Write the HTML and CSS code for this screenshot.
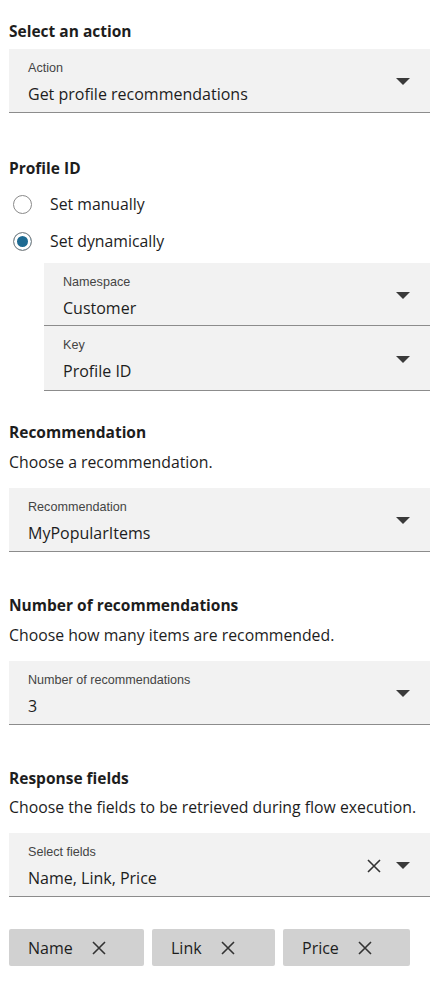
FILE: index.html
```html
<!DOCTYPE html>
<html>
<head>
<meta charset="utf-8">
<link rel="stylesheet" href="styles.css">
</head>
<body>
<div class="page">
  <section class="sec sec-action">
    <h2 class="heading">Select an action</h2>
    <div class="select">
      <div class="select-text">
        <div class="select-label">Action</div>
        <div class="select-value">Get profile recommendations</div>
      </div>
      <span class="caret"></span>
    </div>
  </section>

  <section class="sec sec-profile">
    <h2 class="heading">Profile ID</h2>
    <div class="radios">
      <label class="radio"><span class="radio-dot"></span><span class="radio-text">Set manually</span></label>
      <label class="radio"><span class="radio-dot checked"></span><span class="radio-text">Set dynamically</span></label>
    </div>
    <div class="nested">
      <div class="select">
        <div class="select-text">
          <div class="select-label">Namespace</div>
          <div class="select-value">Customer</div>
        </div>
        <span class="caret"></span>
      </div>
      <div class="select">
        <div class="select-text">
          <div class="select-label">Key</div>
          <div class="select-value">Profile ID</div>
        </div>
        <span class="caret"></span>
      </div>
    </div>
  </section>

  <section class="sec sec-rec">
    <h2 class="heading">Recommendation</h2>
    <p class="desc">Choose a recommendation.</p>
    <div class="select">
      <div class="select-text">
        <div class="select-label">Recommendation</div>
        <div class="select-value">MyPopularItems</div>
      </div>
      <span class="caret"></span>
    </div>
  </section>

  <section class="sec sec-num">
    <h2 class="heading">Number of recommendations</h2>
    <p class="desc">Choose how many items are recommended.</p>
    <div class="select">
      <div class="select-text">
        <div class="select-label">Number of recommendations</div>
        <div class="select-value">3</div>
      </div>
      <span class="caret"></span>
    </div>
  </section>

  <section class="sec sec-fields">
    <h2 class="heading">Response fields</h2>
    <p class="desc">Choose the fields to be retrieved during flow execution.</p>
    <div class="select">
      <div class="select-text">
        <div class="select-label">Select fields</div>
        <div class="select-value">Name, Link, Price</div>
      </div>
      <svg class="clear" width="16" height="16" viewBox="0 0 16 16"><path d="M2 2L14 14M14 2L2 14" stroke="#333" stroke-width="1.6" fill="none"/></svg>
      <span class="caret"></span>
    </div>
    <div class="chips">
      <div class="chip chip-name"><span>Name</span><svg width="16" height="16" viewBox="0 0 16 16"><path d="M2 2L14 14M14 2L2 14" stroke="#333" stroke-width="1.6" fill="none"/></svg></div>
      <div class="chip chip-link"><span>Link</span><svg width="16" height="16" viewBox="0 0 16 16"><path d="M2 2L14 14M14 2L2 14" stroke="#333" stroke-width="1.6" fill="none"/></svg></div>
      <div class="chip chip-price"><span>Price</span><svg width="16" height="16" viewBox="0 0 16 16"><path d="M2 2L14 14M14 2L2 14" stroke="#333" stroke-width="1.6" fill="none"/></svg></div>
    </div>
  </section>
</div>
</body>
</html>
```

FILE: styles.css
```css
* { box-sizing: border-box; }
html, body { margin: 0; padding: 0; background: #fff; }
body {
  font-family: "Open Sans", "Noto Sans", sans-serif;
  color: #1d1d1d;
  width: 437px;
}
.page {
  padding: 21px 7px 0 9px;
  display: flex;
  flex-direction: column;
}
.heading {
  margin: 0;
  font-size: 15.5px;
  font-weight: 700;
  line-height: 20px;
  color: #1d1d1d;
}
.desc {
  margin: 10px 0 0 0;
  font-size: 15.8px;
  line-height: 20px;
  color: #1d1d1d;
}
.select {
  background: #f2f2f2;
  border-bottom: 1px solid #8c8c8c;
  height: 64px;
  display: flex;
  align-items: flex-start;
  padding: 12px 20px 0 19px;
}
.select-text { flex: 1; min-width: 0; }
.select-label {
  font-family: "Liberation Sans", Arial, sans-serif;
  font-size: 12.6px;
  line-height: 14px;
  color: #444;
}
.select-value {
  font-size: 16px;
  line-height: 20px;
  margin-top: 9px;
  color: #1d1d1d;
}
.caret {
  align-self: center;
  width: 0;
  height: 0;
  border-left: 7px solid transparent;
  border-right: 7px solid transparent;
  border-top: 7px solid #3a3a3a;
  margin-top: -10px;
}
.clear { align-self: center; margin-right: 14px; margin-top: -10px; }

.sec-action .heading { margin-bottom: 8px; }
.sec-profile { margin-top: 45px; }
.radios { display: flex; flex-direction: column; gap: 17px; margin-top: 16px; }
.radio { display: flex; align-items: center; height: 20px; }
.radio-dot {
  width: 19px; height: 19px;
  border-radius: 50%;
  border: 1px solid #8a8a8a;
  margin-left: 4px;
  background: #fff;
}
.radio-dot.checked {
  background: #1d6a92;
  box-shadow: inset 0 0 0 3px #fff;
}
.radio-text { font-size: 15.8px; margin-left: 18px; color: #1d1d1d; }
.nested { margin: 12px 0 0 35px; display: flex; flex-direction: column; }
.nested .select { height: 63px; }
.nested .select + .select { height: 65px; }

.sec-rec { margin-top: 31px; }
.sec-rec .select, .sec-num .select, .sec-fields .select { margin-top: 16px; }
.sec-num { margin-top: 43px; }
.sec-fields { margin-top: 43px; }
.sec-fields .desc { margin-top: 9px; }

.chips { display: flex; gap: 8px; margin-top: 32px; }
.chip {
  height: 37px;
  background: #d1d1d1;
  border-radius: 2px;
  display: flex;
  align-items: center;
  padding-left: 19px;
  font-size: 16px;
  color: #1d1d1d;
}
.chip svg { margin-left: 18px; }
.chip-name { width: 135px; }
.chip-link { width: 123px; }
.chip-price { width: 127px; }
```
